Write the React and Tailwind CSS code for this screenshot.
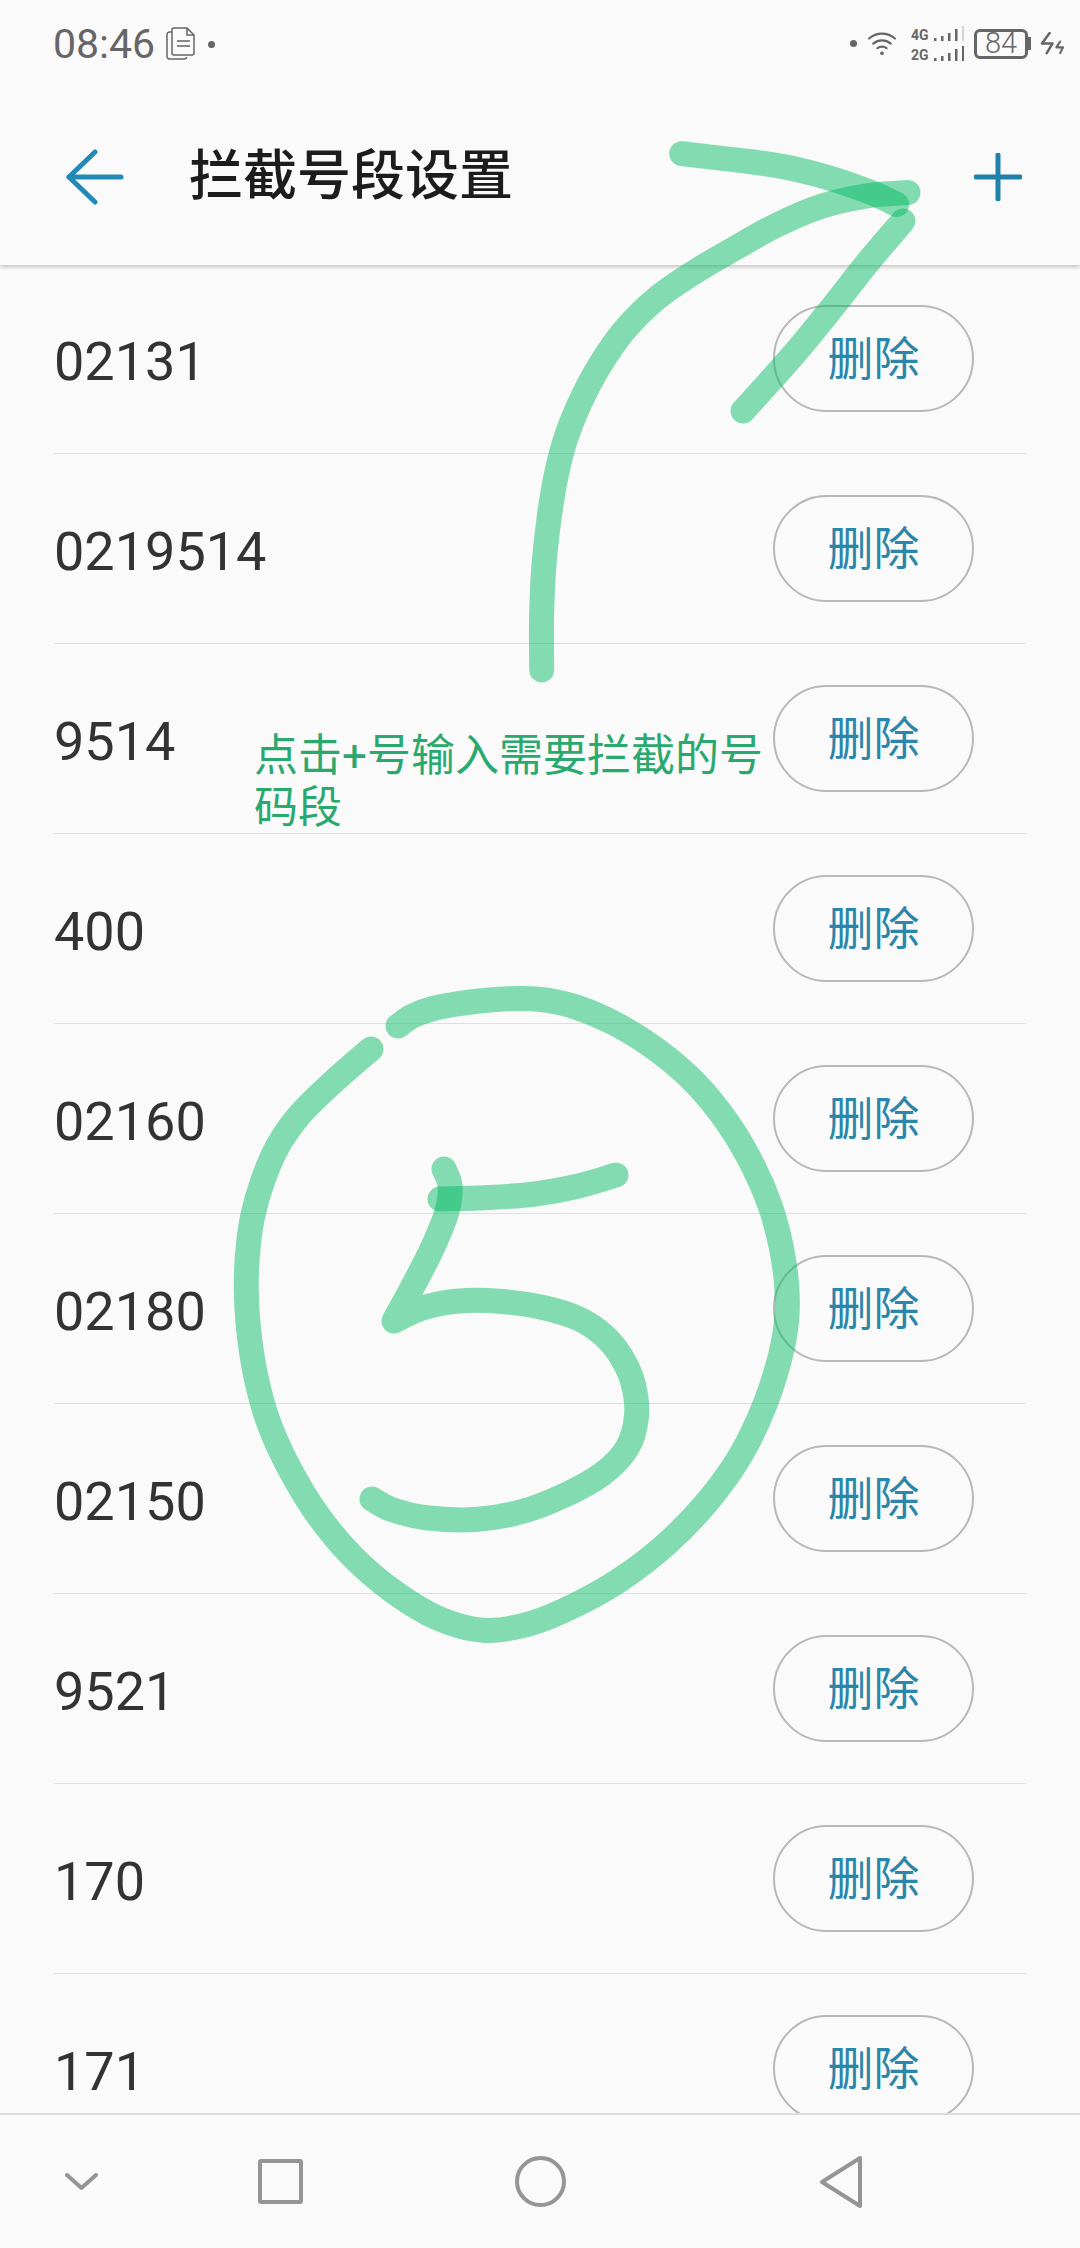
import React from "react";

const rows = ["02131","0219514","9514","400","02160","02180","02150","9521","170","171"];

const P = [
  [[681.7,153.6],[706.7,157],[750,161],[783,166],[816.7,173.6],[850,184.5],[876.7,193.6],[896.7,204.5]],
  [[541.7,670],[540.7,621],[543,566],[548,523],[555,479],[563,439],[580,403],[597,366],[623,330],[653,297],[697,270],[733,250],[777,223],[820,204.5],[867,193.6],[908,192.5]],
  [[743,411],[767,384.5],[800,348],[833,308],[867,261],[903,221]],
  [[371,1049],[331,1083],[295,1117],[277.4,1143],[262,1180],[250.6,1217],[247,1253],[245.6,1293],[247,1320],[254,1377],[266,1420],[285,1463],[316,1517],[350,1557],[392,1593],[438,1622],[484,1636],[526,1627],[576,1607],[622,1580],[668,1547],[710,1500],[744,1457],[767,1403],[782.6,1353],[788,1320],[788,1287],[782.6,1247],[771,1203],[756,1170],[729,1120],[698,1083],[660,1050],[618,1023],[572,1003],[538,998],[507,998],[465,1002],[430.5,1008],[411,1015],[398,1026]],
  [[440,1199],[488,1198],[538,1195],[576,1188],[616,1175]],
];
// The stem and the bowl of the 5 are one stroke with a sharp corner at the tip.
const five = [
  [[444,1169],[453.4,1183],[449.6,1210],[434,1247],[411,1290],[394,1321]],
  [[394,1321],[419,1306],[457,1299],[503,1300],[545,1307],[583.6,1317],[605,1335],[622,1355],[635,1380],[640,1417],[631,1450],[606.5,1475],[564,1497],[522,1513],[480,1523],[419,1519],[388,1510],[372,1499]],
];

function relax(pts) {
  return pts.map((p, i) => {
    if (i === 0 || i === pts.length - 1) return p;
    const a = pts[i - 1], b = pts[i + 1];
    return [(a[0] + 2 * p[0] + b[0]) / 4, (a[1] + 2 * p[1] + b[1]) / 4];
  });
}

function smooth(raw) {
  const pts = relax(raw);
  let d = `M${pts[0][0]} ${pts[0][1]}`;
  for (let i = 0; i < pts.length - 1; i++) {
    const p0 = pts[i - 1] || pts[i], p1 = pts[i], p2 = pts[i + 1], p3 = pts[i + 2] || p2;
    d += `C${p1[0] + (p2[0] - p0[0]) / 6} ${p1[1] + (p2[1] - p0[1]) / 6} ${p2[0] - (p3[0] - p1[0]) / 6} ${p2[1] - (p3[1] - p1[1]) / 6} ${p2[0]} ${p2[1]}`;
  }
  return d;
}

function Bars({ light }) {
  const hs = [3, 5, 8, 12, 15];
  return (
    <svg width="31" height="15" viewBox="0 0 31 15" className="block">
      {hs.map((h, i) => (
        <rect key={i} x={i * 7 + 1} y={15 - h} width="2.5" height={h} fill={light && i === 4 ? "#d2d2d2" : "#666"} />
      ))}
    </svg>
  );
}

function Status() {
  return (
    <div className="h-[88px] flex items-start justify-between text-[#666]">
      <div className="flex items-center pl-[53px] pt-[24px]">
        <span className="text-[41px] leading-[40px]">08:46</span>
        <svg width="30" height="34" viewBox="0 0 30 34" className="ml-[11px]" fill="none" stroke="#666" strokeWidth="1.5">
          <path d="M6 5H3.5A2.5 2.5 0 0 0 1 7.5v22A2.5 2.5 0 0 0 3.5 32h15a2 2 0 0 0 2-2" />
          <path d="M8 1h13l7 7v18a2 2 0 0 1-2 2H8a2 2 0 0 1-2-2V3a2 2 0 0 1 2-2z" fill="#fafafa" />
          <path d="M21 1v7h7M11 14h13M11 19h13" />
        </svg>
        <span className="ml-[12px] w-[7px] h-[7px] rounded-full bg-[#666]" />
      </div>
      <div className="flex items-center pt-[26px] pr-[15px]">
        <span className="w-[7px] h-[7px] rounded-full bg-[#666]" />
        <svg width="30" height="24" viewBox="0 0 32 26" className="ml-[10px]" fill="none" stroke="#666" strokeWidth="2.4" strokeLinecap="round">
          <path d="M2 7C10 0 22 0 30 7" />
          <path d="M6.5 12.5C12 8 20 8 25.5 12.5" />
          <path d="M11 17.5C14 15.5 18 15.5 21 17.5" />
          <circle cx="16" cy="23" r="2" fill="#666" stroke="none" />
        </svg>
        <div className="ml-[14px] w-[53px] flex flex-col">
          <div className="h-[15px] flex items-end justify-between">
            <span className="text-[14px] leading-[11px] font-bold">4G</span>
            <Bars light />
          </div>
          <div className="mt-[5px] h-[15px] flex items-end justify-between">
            <span className="text-[14px] leading-[11px] font-bold">2G</span>
            <Bars />
          </div>
        </div>
        <div className="ml-[10px] flex items-center">
          <div className="w-[54px] h-[30px] border-[3px] border-[#666] rounded-[6px] flex items-center justify-center text-[29px] font-light leading-none">84</div>
          <div className="w-[3px] h-[13px] bg-[#666]" />
        </div>
        <svg width="25" height="23" viewBox="0 0 26 24" className="ml-[9px]" fill="none" stroke="#666" strokeWidth="2.6" strokeLinecap="round" strokeLinejoin="round">
          <path d="M10 1L2 12h11L7 22" />
          <path d="M21 10l-4 6h7l-3 6" strokeWidth="2.2" />
        </svg>
      </div>
    </div>
  );
}

function Header() {
  return (
    <header className="relative z-10 h-[265px] bg-[#fafafa] shadow-[0_2px_4px_rgba(0,0,0,0.22)]">
      <Status />
      <div className="h-[177px] flex items-center relative">
        <svg width="58" height="56" viewBox="0 0 58 56" className="ml-[66px]" fill="none" stroke="#2389b5" strokeWidth="5" strokeLinecap="round" strokeLinejoin="round">
          <path d="M3 28H55" />
          <path d="M29 3L3 28L29 53" />
        </svg>
        <h1 className="ml-[65px] text-[54px] leading-none font-medium text-[#1c1c1c]">拦截号段设置</h1>
        <svg width="48" height="48" viewBox="0 0 48 48" className="ml-auto mr-[58px]" fill="none" stroke="#2181ab" strokeWidth="5" strokeLinecap="round">
          <path d="M24 2V46" />
          <path d="M2 24H46" />
        </svg>
      </div>
    </header>
  );
}

function Row({ n }) {
  return (
    <li className="h-[190px] shrink-0 border-b border-[#dfdfdf] flex items-center justify-between pr-[52px]">
      <span className="text-[54px] leading-none text-[#333] translate-y-[3px]">{n}</span>
      <div className="w-[201px] h-[107px] rounded-[54px] border-2 border-[#b8b8b8] flex items-center justify-center text-[46px] leading-none text-[#2a86aa]">删除</div>
    </li>
  );
}

function Nav() {
  return (
    <footer className="relative z-10 h-[135px] shrink-0 bg-[#fafafa] border-t-2 border-[#dcdcdc] flex items-center">
      <svg width="33" height="17" viewBox="0 0 33 17" className="ml-[65px]" fill="none" stroke="#959595" strokeWidth="4" strokeLinecap="round" strokeLinejoin="round">
        <path d="M2 2L16.5 15L31 2" />
      </svg>
      <div className="ml-[160px] w-[45px] h-[45px] rounded-[3px] border-[4px] border-[#959595]" />
      <div className="ml-[212px] w-[51px] h-[51px] rounded-full border-[4px] border-[#959595]" />
      <svg width="44" height="52" viewBox="0 0 44 52" className="ml-[253px]" fill="none" stroke="#959595" strokeWidth="4" strokeLinejoin="round">
        <path d="M3 26L41 2V50Z" />
      </svg>
    </footer>
  );
}

export default function App() {
  return (
    <div className="relative w-[1080px] h-[2248px] overflow-hidden flex flex-col bg-[#fafafa] font-[Roboto,'Noto_Sans_CJK_SC',sans-serif]">
      <Header />
      <ul className="flex-1 min-h-0 overflow-hidden -mt-px mx-[54px] flex flex-col">
        {rows.map((n) => <Row key={n} n={n} />)}
      </ul>
      <Nav />
      <p className="absolute z-20 left-[254px] top-[730px] w-[520px] text-[44px] leading-[52px] text-[#2aa96f]">点击+号输入需要拦截的号码段</p>
      <svg className="absolute z-20 inset-0 pointer-events-none" width="1080" height="2248" viewBox="0 0 1080 2248" fill="none" stroke="rgb(0,187,98)" strokeOpacity="0.48" strokeWidth="25" strokeLinecap="round" strokeLinejoin="round">
        {P.map((pts, i) => <path key={i} d={smooth(pts)} />)}
        <path d={five.map(smooth).join("")} />
      </svg>
    </div>
  );
}
